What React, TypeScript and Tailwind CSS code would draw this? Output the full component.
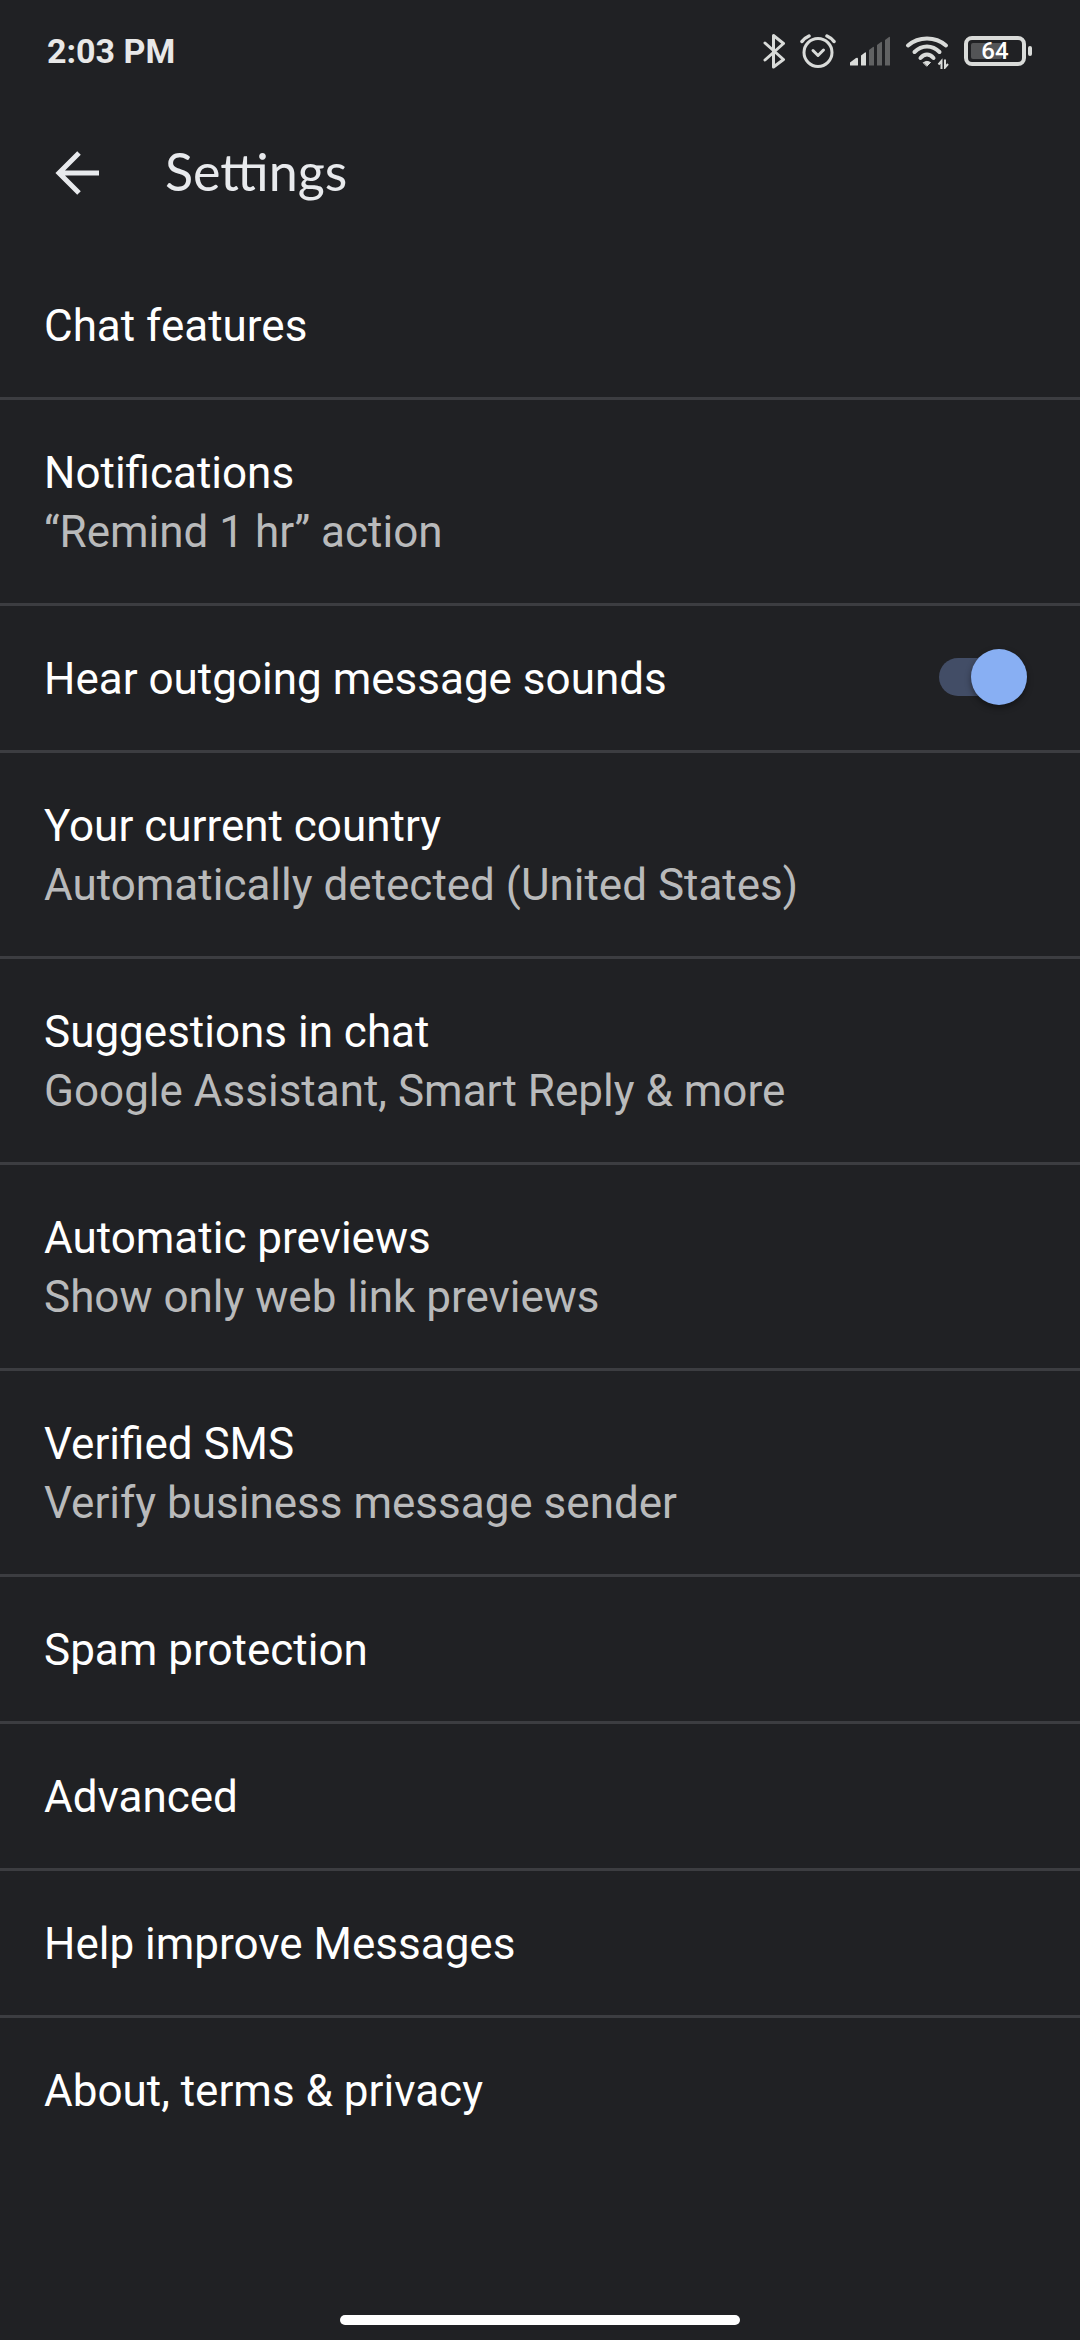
import { useState } from "react";

type SettingsItem = {
  title: string;
  summary?: string;
};

const BEFORE_SOUNDS: SettingsItem[] = [
  { title: "Chat features" },
  { title: "Notifications", summary: "“Remind 1 hr” action" },
];

const AFTER_SOUNDS: SettingsItem[] = [
  { title: "Your current country", summary: "Automatically detected (United States)" },
  { title: "Suggestions in chat", summary: "Google Assistant, Smart Reply & more" },
  { title: "Automatic previews", summary: "Show only web link previews" },
  { title: "Verified SMS", summary: "Verify business message sender" },
  { title: "Spam protection" },
  { title: "Advanced" },
  { title: "Help improve Messages" },
  { title: "About, terms & privacy" },
];

function BluetoothIcon() {
  return (
    <svg width="24" height="36" viewBox="0 0 24 36" fill="none" stroke="currentColor" strokeWidth="3" strokeLinecap="round" strokeLinejoin="round" aria-hidden="true">
      <path d="M3 10 21.5 26.5 11.5 34V2.500L21.5 10.500 3 27" />
    </svg>
  );
}

function AlarmIcon() {
  return (
    <svg width="36" height="36" viewBox="0 0 36 36" fill="none" stroke="currentColor" strokeWidth="3" strokeLinecap="round" strokeLinejoin="round" aria-hidden="true">
      <circle cx="18" cy="19.5" r="14" />
      <path d="M13 17.5 18 22.5 23.5 17" />
      <path d="M2 8.5Q4.5 5 9 3M34 8.5Q31.500 5 27 3" strokeWidth="3.5" />
    </svg>
  );
}

function SignalIcon() {
  return (
    <svg width="41" height="36" viewBox="1 0 41 36" fill="currentColor" aria-hidden="true">
      <path d="M1 32V29.500L7 25Q9 24 9 26V32Q9 32.500 8.500 32.500H1.500Q1 32.500 1 32Z" />
      <path d="M12 32V22.500L16 19.500Q17 19 17 20V32Q17 32.500 16.500 32.500H12.500Q12 32.500 12 32Z" />
      <g opacity="0.35">
        <path d="M20 32.500V17L24 14Q25 13.500 25 14.500V32.500Z" />
        <path d="M28 32.500V12L32 9Q33 8.500 33 9.500V32.500Z" />
        <path d="M36 32.500V7L40 4Q41 3.500 41 4.500V32.500Z" />
      </g>
    </svg>
  );
}

function WifiIcon() {
  return (
    <svg width="45" height="36" viewBox="0 0 45 36" fill="none" stroke="currentColor" strokeWidth="4" strokeLinecap="round" aria-hidden="true">
      <path d="M3 12.500Q11 5.500 22 5.500T41 12.500" />
      <path d="M9.500 19Q15 13.500 22 13.500T34.500 19" />
      <path d="M15.500 25Q18.500 21.500 22 21.500T28.500 25" />
      <path d="M18.500 29.500Q22 27 25.500 29.500L22 33Z" fill="currentColor" stroke="currentColor" strokeWidth="1" strokeLinejoin="round" />
      <path d="M36.500 36V28L33.500 31.500M40 26.500V34.500L43 31" strokeWidth="2" strokeLinecap="butt" />
    </svg>
  );
}

function Battery({ level }: { level: number }) {
  return (
    <div className="flex items-center gap-[2px]" role="img" aria-label={`Battery ${level}%`}>
      <div className="relative flex h-[30px] w-[62px] items-center justify-center rounded-[8px] border-4 border-[#d9dbd9]">
        <div className="absolute inset-[3px]">
          <div className="h-full rounded-[2px] bg-[#535456]" style={{ width: `${level}%` }} />
        </div>
        <span className="relative text-[24px] leading-[24px] font-medium text-white">{level}</span>
      </div>
      <div className="h-[10px] w-1 rounded-[2px] bg-[#d9dbd9]" />
    </div>
  );
}

function StatusBar() {
  return (
    <div className="flex h-[102px] items-center justify-between pr-12 pl-[47px] text-[#e8e8e8]">
      <span className="text-[34px] leading-[40px] font-bold">2:03 PM</span>
      <div className="flex items-center gap-[14px] text-[#d9dbd9]">
        <BluetoothIcon />
        <AlarmIcon />
        <SignalIcon />
        <WifiIcon />
        <Battery level={64} />
      </div>
    </div>
  );
}

function Header() {
  return (
    <header className="flex h-[151px] items-start gap-[66px] pt-[38px] pl-[55px] text-[#e8eaed]">
      <button type="button" aria-label="Back" className="mt-[11px]">
        <svg width="44" height="44" viewBox="0 0 44 44" fill="none" stroke="currentColor" strokeWidth="5" aria-hidden="true">
          <path d="M44 22H4M24 2 4 22 24 42" />
        </svg>
      </button>
      <h1 className="font-[Lato,sans-serif] text-[52px] leading-[62px]">Settings</h1>
    </header>
  );
}

function SettingsRow({ title, summary }: SettingsItem) {
  return (
    <li>
      <button type="button" className="block w-full px-11 pt-11 pb-[41px] text-left text-[44px] leading-[59px]">
        <span className="block text-white">{title}</span>
        {summary && <span className="block text-[#b9babb]">{summary}</span>}
      </button>
    </li>
  );
}

function SoundsRow() {
  const [enabled, setEnabled] = useState(true);

  return (
    <li>
      <label className="relative flex items-start justify-between pt-11 pr-[61px] pb-[41px] pl-11 text-[44px] leading-[59px] text-white">
        Hear outgoing message sounds
        <input
          type="checkbox"
          role="switch"
          className="peer sr-only"
          checked={enabled}
          onChange={(e) => setEnabled(e.target.checked)}
        />
        {/* the thumb is taller and wider than its track */}
        <span className="my-2 flex h-[38px] w-20 items-center justify-start rounded-full bg-[#424d66] peer-checked:justify-end">
          <span className="-mx-2 size-14 shrink-0 rounded-full bg-[#88aff3] shadow-[0_3px_6px_rgba(0,0,0,0.4)]" />
        </span>
      </label>
    </li>
  );
}

export default function App() {
  return (
    <div className="flex min-h-screen flex-col bg-[#202124] font-[Roboto,sans-serif]">
      <StatusBar />
      <Header />
      <main className="flex-1">
        <ul className="divide-y-[3px] divide-[#3c3d41]">
          {BEFORE_SOUNDS.map((item) => (
            <SettingsRow key={item.title} {...item} />
          ))}
          <SoundsRow />
          {AFTER_SOUNDS.map((item) => (
            <SettingsRow key={item.title} {...item} />
          ))}
        </ul>
      </main>
      {/* gesture handle */}
      <div className="flex justify-center pb-[15px]">
        <div className="h-[10px] w-[37%] rounded-full bg-white" />
      </div>
    </div>
  );
}
